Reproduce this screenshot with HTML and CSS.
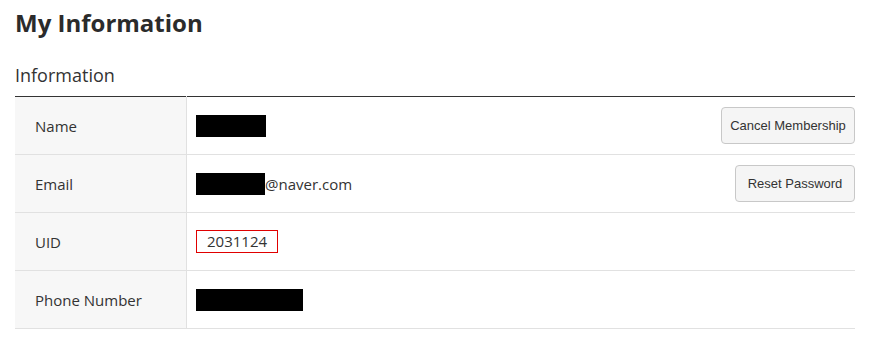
FILE: index.html
```html
<!DOCTYPE html>
<html>
<head>
    <title>My Information</title>
    <link rel="stylesheet" href="styles.css">
</head>
<body>
    <h1 class="page-title">My Information</h1>
    <h2 class="section-title">Information</h2>
    <table class="info-table">
        <tr>
            <th>Name</th>
            <td>
                <div class="cell">
                    <span class="masked name-mask"></span>
                    <button type="button" class="btn btn-cancel">Cancel Membership</button>
                </div>
            </td>
        </tr>
        <tr>
            <th>Email</th>
            <td>
                <div class="cell">
                    <span class="value"><span class="masked email-mask"></span>@naver.com</span>
                    <button type="button" class="btn btn-reset">Reset Password</button>
                </div>
            </td>
        </tr>
        <tr>
            <th>UID</th>
            <td>
                <div class="cell">
                    <span class="uid">2031124</span>
                </div>
            </td>
        </tr>
        <tr>
            <th>Phone Number</th>
            <td>
                <div class="cell">
                    <span class="masked phone-mask"></span>
                </div>
            </td>
        </tr>
    </table>
</body>
</html>
```

FILE: styles.css
```css
body {
    font-family: "Open Sans", "Noto Sans", sans-serif;
    color: #333;
    background-color: #fff;
    margin: 0;
    padding: 0 19px 0 15px;
}
.page-title {
    font-size: 24px;
    font-weight: bold;
    margin: 5px 0 0;
    line-height: 36px;
    color: #2b2b2b;
}
.section-title {
    font-size: 18px;
    font-weight: normal;
    margin: 22px 0 0;
    line-height: 24px;
    color: #333;
}
.info-table {
    width: 100%;
    margin-top: 9px;
    border-collapse: collapse;
    border-top: 1px solid #333;
    font-size: 15px;
}
.info-table th {
    width: 151px;
    padding: 0 0 0 20px;
    text-align: left;
    font-weight: normal;
    background-color: #f7f7f7;
    border-right: 1px solid #e1e1e1;
    color: #333;
}
.info-table th,
.info-table td {
    height: 57px;
    border-bottom: 1px solid #e1e1e1;
}
.info-table td {
    padding: 0 0 0 9px;
}
.cell {
    display: flex;
    align-items: center;
    justify-content: space-between;
}
.value {
    display: flex;
    align-items: center;
}
.masked {
    display: inline-block;
    height: 22px;
    background-color: #000;
}
.name-mask {
    width: 70px;
}
.email-mask {
    width: 69px;
}
.phone-mask {
    width: 107px;
}
.uid {
    display: inline-block;
    box-sizing: border-box;
    width: 82px;
    height: 23px;
    line-height: 21px;
    padding-left: 10px;
    border: 1px solid #e00000;
}
.btn {
    font-family: "Liberation Sans", Arial, sans-serif;
    font-size: 13px;
    color: #333;
    background-color: #f5f5f5;
    border: 1px solid #c8c8c8;
    border-radius: 4px;
    height: 37px;
    padding: 0;
    cursor: pointer;
}
.btn-cancel {
    width: 134px;
}
.btn-reset {
    width: 120px;
}
```
